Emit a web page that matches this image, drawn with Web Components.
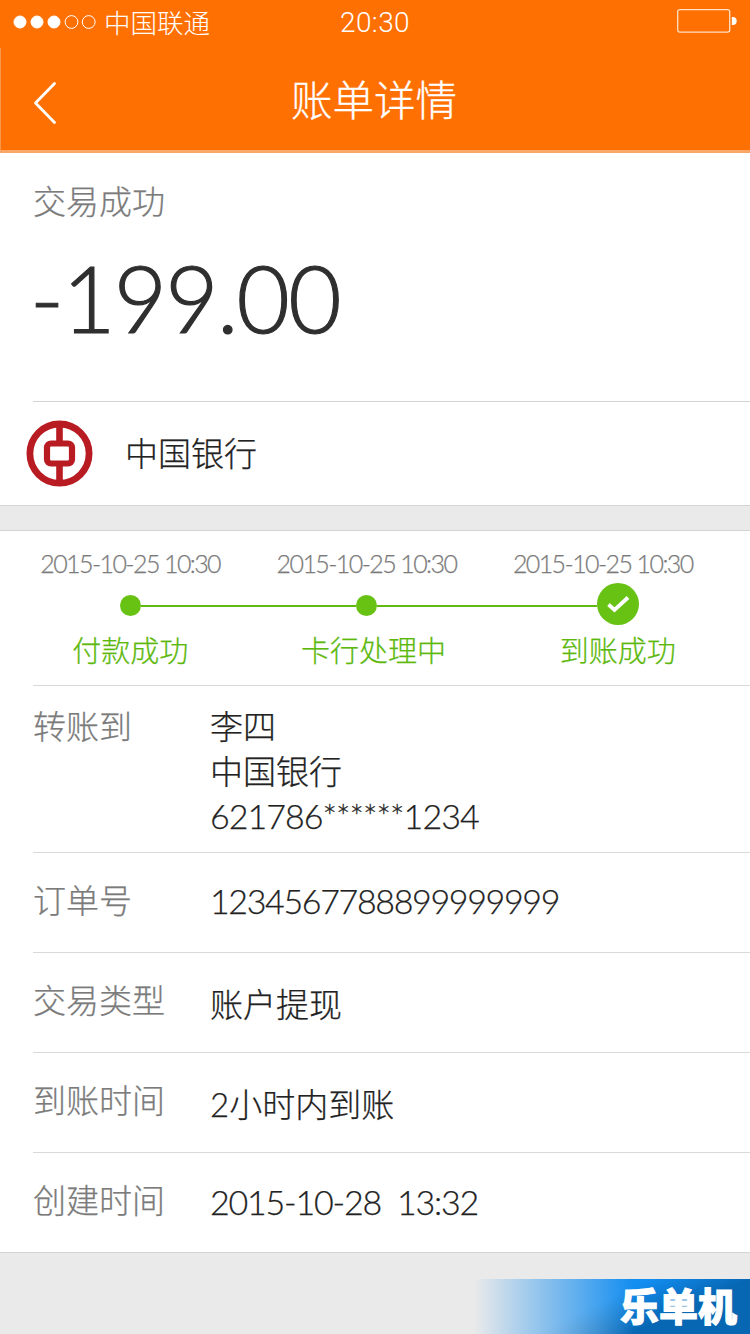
<!DOCTYPE html>
<html lang="zh-CN">
<head>
<meta charset="utf-8">
<title>账单详情</title>
<style>
  body {
    margin: 0;
    background: #eaeaea;
    color: #222;
    font: 300 33px/45px Lato, "Noto Sans CJK SC", sans-serif;
    -webkit-text-stroke: .25px;
  }
</style>
</head>
<body>

<bill-page>
  <status-bar slot="top" carrier="中国联通" time="20:30"></status-bar>
  <nav-bar slot="top">账单详情</nav-bar>

  <bill-summary>
    <span slot="state">交易成功</span>
    <span slot="amount">-199.00</span>
    <span slot="bank">中国银行</span>
  </bill-summary>

  <bill-panel>
    <progress-steps>
      <progress-step time="2015-10-25 10:30">付款成功</progress-step>
      <progress-step time="2015-10-25 10:30" style="--name-shift: 7px">卡行处理中</progress-step>
      <progress-step time="2015-10-25 10:30" style="--name-shift: 15px; --dot-shift: 15px" done>到账成功</progress-step>
    </progress-steps>
    <detail-row label="转账到" tall>
      <div>李四</div>
      <div>中国银行</div>
      <div style="font-size: 34px; line-height: 43px; letter-spacing: -.95px">621786******1234</div>
    </detail-row>
    <detail-row label="订单号" style="--shift: -1px; --size: 34px; --spacing: -1.35px">1234567788899999999</detail-row>
    <detail-row label="交易类型" style="--shift: 3px">账户提现</detail-row>
    <detail-row label="到账时间" style="--shift: 3px">2小时内到账</detail-row>
    <detail-row label="创建时间" style="--size: 34px; --spacing: -1.2px">2015-10-28&nbsp; 13:32</detail-row>
  </bill-panel>

  <site-badge slot="badge">乐单机</site-badge>
</bill-page>

<script>
/*
 * Base class: clones the element's template into an open shadow root
 */
class BaseElement extends HTMLElement {
  constructor() {
    super();

    let t = document.createElement("template");
    t.innerHTML = this.template;
    this.attachShadow({ mode: "open" });
    this.shadowRoot.append(t.content.cloneNode(true));
  }

  // Copy an attribute into the matching part of the template
  fill(selector, name) {
    this.shadowRoot.querySelector(selector).textContent = this.getAttribute(name);
  }
}

/*
 * Page frame
 */
class BillPage extends BaseElement {
  get template() {
    return `
    <style>
      :host {
        display: flex;
        flex-direction: column;
        position: relative;
        height: 1334px;
        overflow: hidden;
      }

      header {
        background: #ff7003;
        color: #fff;
        height: 150px;
        border-bottom: 3px solid #f9a766;
      }

      ::slotted(site-badge) {
        position: absolute;
        right: 0;
        bottom: 0;
      }
    </style>

    <header><slot name="top"></slot></header>
    <slot></slot>
    <slot name="badge"></slot>
    `;
  }
}

/*
 * Phone status bar
 */
class StatusBar extends BaseElement {
  get template() {
    return `
    <style>
      :host {
        display: grid;
        grid-template-columns: 1fr auto 1fr;
        align-items: center;
        height: 46px;
        padding: 0 13px;
        font-size: 26.5px;
        line-height: 46px;
        -webkit-text-stroke: 0;
      }

      .left {
        display: flex;
        align-items: center;
        gap: 7px;
        margin-top: -1px;
      }

      .time {
        font-family: Roboto, sans-serif;
        font-size: 28px;
        letter-spacing: .4px;
      }

      .battery {
        justify-self: end;
        margin: -4px 0 0;
      }

      svg {
        display: block;
      }
    </style>

    <div class="left">
      <svg width="84" height="16" viewBox="0 0 84 16" fill="#fff" stroke="#fff">
        <circle cx="7" cy="7" r="6"/>
        <circle cx="24" cy="7" r="6"/>
        <circle cx="41" cy="7" r="6"/>
        <circle cx="58.5" cy="7" r="6.4" fill="none"/>
        <circle cx="75.7" cy="7" r="6.4" fill="none"/>
      </svg>
      <span class="carrier"></span>
    </div>
    <span class="time"></span>
    <svg class="battery" width="60" height="24" viewBox="0 0 60 24">
      <rect x=".7" y=".7" width="52" height="22.4" rx="2" fill="none" stroke="#ffe0c4" stroke-width="1.3"/>
      <path d="M54.8 8h.9a4 4 0 0 1 0 8h-.9z" fill="#fff"/>
    </svg>
    `;
  }

  connectedCallback() {
    this.fill(".carrier", "carrier");
    this.fill(".time", "time");
  }
}

/*
 * Title bar with the back arrow
 */
class NavBar extends BaseElement {
  get template() {
    return `
    <style>
      :host {
        display: grid;
        grid-template-columns: 90px 1fr 93px;
        align-items: center;
        height: 102px;
        margin-top: 2px;
        border-left: 1px solid #f9974a;
        box-sizing: border-box;
        font-size: 41.5px;
        line-height: 60px;
        text-align: center;
        -webkit-text-stroke: .3px;
      }

      svg {
        margin: 8px 0 0 31px;
      }

      .title {
        margin-top: 1px;
      }
    </style>

    <svg width="26" height="44" viewBox="0 0 26 44" fill="none" stroke="#fff" stroke-width="2.8" stroke-linecap="round" stroke-linejoin="round">
      <path d="M22.5 2.5L3.5 22L22.5 41.5"/>
    </svg>
    <div class="title"><slot></slot></div>
    `;
  }
}

/*
 * State, amount and bank of the bill
 */
class BillSummary extends BaseElement {
  get template() {
    return `
    <style>
      :host {
        display: block;
        height: 352px;
        background: #fff;
        border-bottom: 1px solid #d4d4d4;
      }

      .sum {
        height: 248px;
        box-sizing: border-box;
        padding-top: 26px;
      }

      .state {
        margin-left: 33px;
        color: #7b7b7b;
      }

      .amount {
        margin: 14px 0 0 30px;
        font-size: 92px;
        line-height: 120px;
        letter-spacing: -1.8px;
        color: #2f2f2f;
        -webkit-text-stroke: 1.2px;
      }

      .bank {
        display: flex;
        align-items: center;
        gap: 32px;
        height: 103px;
        margin-left: 33px;
        border-top: 1px solid #d4d4d4;
      }

      svg {
        margin-left: -7px;
      }
    </style>

    <div class="sum">
      <div class="state"><slot name="state"></slot></div>
      <div class="amount"><slot name="amount"></slot></div>
    </div>
    <div class="bank">
      <svg width="67" height="67" viewBox="0 0 67 67" fill="none" stroke="#b81c22">
        <circle cx="33.5" cy="33.6" r="29.6" stroke-width="6.8"/>
        <path d="M33.5 6v17M33.5 44v17" stroke-width="6.6"/>
        <rect x="21" y="23.5" width="25" height="20" rx="4" stroke-width="6.2"/>
      </svg>
      <slot name="bank"></slot>
    </div>
    `;
  }
}

/*
 * White panel holding the steps and the rows
 */
class BillPanel extends BaseElement {
  get template() {
    return `
    <style>
      :host {
        display: block;
        margin-top: 24px;
        background: #fff;
        border: solid #d4d4d4;
        border-width: 1px 0;
      }
    </style>

    <slot></slot>
    `;
  }
}

/*
 * Row of progress steps
 */
class ProgressSteps extends BaseElement {
  get template() {
    return `
    <style>
      :host {
        display: grid;
        grid-template-columns: repeat(3, 236.3px);
        height: 154px;
        padding-left: 12px;
      }
    </style>

    <slot></slot>
    `;
  }
}

class ProgressStep extends BaseElement {
  get template() {
    return `
    <style>
      :host {
        --half: 10.5px;
        display: flex;
        flex-direction: column;
        align-items: center;
        padding-top: 12px;
        color: #5cb80c;
        font-size: 29px;
        white-space: nowrap;
      }

      :host([done]) {
        --half: 21px;
      }

      .time {
        color: #7b7b7b;
        font-size: 25px;
        line-height: 40px;
        letter-spacing: -1.6px;
      }

      .track {
        display: grid;
        grid-template-columns: calc(50% - var(--half) + var(--dot-shift, 0px)) auto 1fr;
        align-items: center;
        width: 100%;
        height: 42px;
      }

      .track::before,
      .track::after {
        content: "";
        height: 2px;
        margin-top: 3px;
        background: #61b911;
      }

      :host(:first-child) .track::before,
      :host(:last-child) .track::after {
        visibility: hidden;
      }

      .dot {
        width: calc(var(--half) * 2);
        height: calc(var(--half) * 2);
        border-radius: 50%;
        background: #67c213;
      }

      :host(:not([done])) .dot {
        margin-top: 3px;
      }

      svg {
        display: none;
      }

      :host([done]) svg {
        display: block;
      }

      .name {
        margin-top: 3px;
        padding-left: calc(var(--name-shift, 0px) * 2);
      }
    </style>

    <div class="time"></div>
    <div class="track">
      <div class="dot">
        <svg width="42" height="42" viewBox="0 0 42 42" fill="none" stroke="#fff" stroke-width="3.8">
          <path d="M11.5 21.5L17.5 27L31 14.5"/>
        </svg>
      </div>
    </div>
    <div class="name"><slot></slot></div>
    `;
  }

  connectedCallback() {
    this.fill(".time", "time");
  }
}

/*
 * Label and value
 */
class DetailRow extends BaseElement {
  get template() {
    return `
    <style>
      :host {
        display: grid;
        grid-template-columns: 177px 1fr;
        align-items: center;
        height: 99px;
        margin-left: 33px;
        border-top: 1px solid #d9d9d9;
      }

      :host([tall]) {
        align-items: start;
        height: 148px;
        padding-top: 18px;
      }

      .label {
        color: #7b7b7b;
        margin-top: -4px;
      }

      :host([tall]) .label {
        margin-top: 0;
      }

      .value {
        font-size: var(--size, 33px);
        letter-spacing: var(--spacing, 0);
        margin-top: calc(var(--shift, 0px) * 2 - 2px);
      }

      :host([tall]) .value {
        margin-top: 0;
      }
    </style>

    <div class="label"></div>
    <div class="value"><slot></slot></div>
    `;
  }

  connectedCallback() {
    this.fill(".label", "label");
  }
}

/*
 * Corner badge with the site's name
 */
class SiteBadge extends BaseElement {
  get template() {
    return `
    <style>
      :host {
        display: block;
        box-sizing: border-box;
        width: 276px;
        height: 55px;
        padding-right: 13px;
        background:
          linear-gradient(90deg, #eaeaea 0, #eaeaea00 58%),
          linear-gradient(155deg, #128df0 45%, #0767b3 70%);
        color: #fff;
        font-size: 39px;
        font-weight: 900;
        line-height: 54px;
        text-align: right;
        -webkit-text-stroke: 1px;
      }
    </style>

    <slot></slot>
    `;
  }
}

customElements.define("bill-page", BillPage);
customElements.define("status-bar", StatusBar);
customElements.define("nav-bar", NavBar);
customElements.define("bill-summary", BillSummary);
customElements.define("bill-panel", BillPanel);
customElements.define("progress-steps", ProgressSteps);
customElements.define("progress-step", ProgressStep);
customElements.define("detail-row", DetailRow);
customElements.define("site-badge", SiteBadge);
</script>
</body>
</html>
